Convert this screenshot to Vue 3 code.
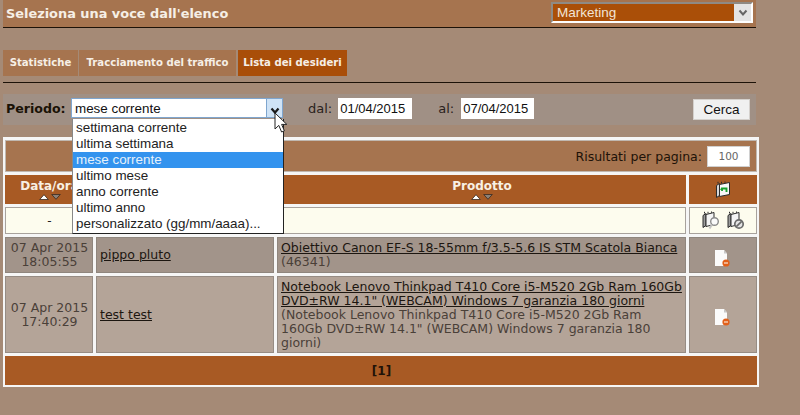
<script setup>
const tabs = [
  { label: 'Statistiche', active: false },
  { label: 'Tracciamento del traffico', active: false },
  { label: 'Lista dei desideri', active: true }
];

const periods = [
  'settimana corrente',
  'ultima settimana',
  'mese corrente',
  'ultimo mese',
  'anno corrente',
  'ultimo anno',
  'personalizzato (gg/mm/aaaa)...'
];

const columns = ['Data/ora', 'Utente', 'Prodotto'];

const rows = [
  {
    date: '07 Apr 2015',
    time: '18:05:55',
    user: 'pippo pluto',
    product: 'Obiettivo Canon EF-S 18-55mm f/3.5-5.6 IS STM Scatola Bianca',
    detail: '(46341)',
    tone: 'dark'
  },
  {
    date: '07 Apr 2015',
    time: '17:40:29',
    user: 'test test',
    product: 'Notebook Lenovo Thinkpad T410 Core i5-M520 2Gb Ram 160Gb DVD±RW 14.1" (WEBCAM) Windows 7 garanzia 180 giorni',
    detail: '(Notebook Lenovo Thinkpad T410 Core i5-M520 2Gb Ram 160Gb DVD±RW 14.1" (WEBCAM) Windows 7 garanzia 180 giorni)',
    tone: 'light'
  }
];
</script>

<template>
  <div class="page">
    <header class="top">
      <h1>Seleziona una voce dall'elenco</h1>
      <div class="dept">
        <span>Marketing</span>
        <i class="dept-arrow">
          <svg width="10" height="8" viewBox="0 0 10 8"><path d="M1.5 1.5 5 5.5 8.5 1.5" fill="none" stroke="#666" stroke-width="2" /></svg>
        </i>
      </div>
    </header>

    <nav class="tabs">
      <a v-for="tab in tabs" :key="tab.label" :class="{ active: tab.active }">{{ tab.label }}</a>
    </nav>

    <form class="filter" @submit.prevent>
      <b class="periodo">Periodo:</b>
      <div class="period-select">
        <span class="value">mese corrente</span>
        <i class="arrow">
          <svg width="10" height="8" viewBox="0 0 10 8"><path d="M1.5 1.5 5 5.5 8.5 1.5" fill="none" stroke="#1a1a1a" stroke-width="2.2" /></svg>
        </i>
        <ul class="options">
          <li v-for="p in periods" :key="p" :class="{ sel: p === 'mese corrente' }">{{ p }}</li>
        </ul>
        <svg class="cursor" width="15" height="22" viewBox="0 0 15 22">
          <path d="M1 1V17L4.8 13.4 7.6 20 10.4 18.8 7.6 12.4H12.8Z" fill="#fff" stroke="#222" stroke-width="1" />
        </svg>
      </div>
      <label class="dal">dal:</label>
      <input class="date" value="01/04/2015" readonly />
      <label class="al">al:</label>
      <input class="date" value="07/04/2015" readonly />
      <button class="cerca" type="button">Cerca</button>
    </form>

    <section class="grid">
      <div class="cell wide pager-top">
        Risultati per pagina:
        <input class="per-page" value="100" readonly />
      </div>

      <div v-for="col in columns" :key="col" class="cell head">
        <span>{{ col }}</span>
        <span class="sort">
          <svg width="10" height="6" viewBox="0 0 10 6"><path d="M5 .7 9.3 5.5H.7Z" fill="#fff" stroke="#3a2a20" stroke-width=".8" /></svg>
          <svg width="10" height="6" viewBox="0 0 10 6"><path d="M.7 .5H9.3L5 5.3Z" fill="#8c8178" stroke="#3a2a20" stroke-width=".8" /></svg>
        </span>
      </div>
      <div class="cell head head-icon">
        <svg width="16" height="18" viewBox="0 0 16 18">
          <path d="M1.5 4.5 4.5 2.5V14.5L1.5 16.5Z" fill="#d8d8d8" stroke="#2c2c2c" />
          <path d="M4.5 3.5 14.5 1.5V13.5L4.5 15.5Z" fill="#f8f8f8" stroke="#2c2c2c" />
          <path d="M3 2.5 3 .8M6.5 2.5 6.5 .8M10 1.8 10 .5" stroke="#2c2c2c" />
          <path d="M7 10V7.5H11.5V11M7 7.5 5.8 9" fill="none" stroke="#16a02c" stroke-width="1.9" />
        </svg>
      </div>

      <div class="cell search center">-</div>
      <div class="cell search"></div>
      <div class="cell search"></div>
      <div class="cell search center note-cell">
        <svg width="18" height="19" viewBox="0 0 18 19">
          <path d="M1 4.500 4 2.500V14.500L1 16.500Z" fill="#9c9c9c" stroke="#2c2c2c" />
          <path d="M4 3.500 12 1.500V13.500L4 15.500Z" fill="#f4f4f4" stroke="#2c2c2c" />
          <path d="M2.500 2.500V.8M6 2.500V.8M9.500 1.800V.5" stroke="#2c2c2c" />
          <circle cx="12.5" cy="10.5" r="3.8" fill="#fafafa" stroke="#8a8a8a" stroke-width="1.4" />
          <path d="M10 13.500 7.500 17.500" stroke="#c4c4c4" stroke-width="2" />
        </svg>
        <svg width="18" height="19" viewBox="0 0 18 19">
          <path d="M1 4.500 4 2.500V14.500L1 16.500Z" fill="#9c9c9c" stroke="#2c2c2c" />
          <path d="M4 3.500 12 1.500V13.500L4 15.500Z" fill="#f4f4f4" stroke="#2c2c2c" />
          <path d="M2.500 2.500V.8M6 2.500V.8M9.500 1.800V.5" stroke="#2c2c2c" />
          <circle cx="12" cy="13" r="4.2" fill="#e4e4e4" stroke="#6a6a6a" stroke-width="1.7" />
          <path d="M9.3 15.700 14.700 10.300" stroke="#6a6a6a" stroke-width="1.7" />
        </svg>
      </div>

      <template v-for="row in rows" :key="row.time">
        <div class="cell data center muted" :class="row.tone">{{ row.date }}<br />{{ row.time }}</div>
        <div class="cell data" :class="row.tone"><a class="link">{{ row.user }}</a></div>
        <div class="cell data product" :class="row.tone">
          <div><a class="link">{{ row.product }}</a><br /><span class="muted">{{ row.detail }}</span></div>
        </div>
        <div class="cell data center doc" :class="row.tone">
          <svg width="16" height="17" viewBox="0 0 16 17">
            <path d="M1 0H10L13 3.500V16H1Z" fill="#fbfbfb" />
            <path d="M10 0V3.500H13Z" fill="#c8c8c8" />
            <circle cx="12" cy="13" r="3.6" fill="#e2601a" />
            <path d="M10 13H14" stroke="#fbe4d4" stroke-width="1.2" />
          </svg>
        </div>
      </template>

      <div class="cell wide pager-bottom">[1]</div>
    </section>
  </div>
</template>

<style>
html,
body {
  background: #a58a76;
}
</style>

<style scoped>
.page {
  width: 756px;
  padding: 0 0 28px 3px;
  font-family: "DejaVu Sans", sans-serif;
  font-size: 12px;
  color: #222;
}

.top {
  display: flex;
  justify-content: space-between;
  align-items: flex-start;
  width: 753px;
  height: 27px;
  background: #a6744f;
  border-bottom: 1px solid #1c1208;
}

.top h1 {
  margin: 6px 0 0 3px;
  font-size: 12.9px;
  font-weight: bold;
  line-height: 16px;
  color: #f6efe6;
}

.dept {
  display: flex;
  align-items: center;
  justify-content: space-between;
  width: 202px;
  height: 21px;
  margin: 2px 3px 0 0;
  padding-left: 4px;
  box-sizing: border-box;
  background: #aa4f08;
  border: 2px solid;
  border-color: #8f8a84 #fff #fff #8f8a84;
  font-family: "Liberation Sans", sans-serif;
  font-size: 13.5px;
  color: #f2e4d6;
}

.dept-arrow {
  display: flex;
  align-items: center;
  justify-content: center;
  width: 17px;
  height: 17px;
  background: #e4e4e4;
}

.tabs {
  display: grid;
  grid-template-columns: 75px 157px 110px;
  gap: 1px;
  width: 753px;
  height: 26px;
  margin-top: 22px;
  padding-bottom: 6px;
  border-bottom: 1px solid #1c1208;
}

.tabs a {
  background: #a6744f;
  font-size: 10.15px;
  font-weight: bold;
  line-height: 26px;
  text-align: center;
  color: #f6efe6;
}

.tabs a.active {
  margin-left: 1px;
  background: #a94e09;
}

.filter {
  display: flex;
  align-items: flex-start;
  width: 753px;
  height: 31px;
  margin-top: 11px;
  padding-top: 4px;
  box-sizing: border-box;
  background: #a09085;
}

.periodo {
  width: 65px;
  margin-left: 3px;
  font-size: 12.6px;
  line-height: 21px;
  color: #1a1206;
}

.period-select {
  position: relative;
  display: flex;
  align-items: center;
  justify-content: space-between;
  width: 212px;
  height: 20px;
  box-sizing: border-box;
  background: #fff;
  border: 1px solid #7fa6cf;
  font-family: "Liberation Sans", sans-serif;
  font-size: 13.4px;
  color: #111;
}

.value {
  padding-left: 3px;
}

.arrow {
  display: flex;
  align-items: flex-end;
  justify-content: center;
  width: 16px;
  height: 18px;
  padding-bottom: 2px;
  box-sizing: border-box;
  background: #cfe3f6;
  border-left: 1px solid #7fa6cf;
}

.options {
  position: absolute;
  top: 20px;
  left: 0;
  z-index: 3;
  width: 212px;
  margin: 0;
  padding: 1px 0;
  box-sizing: border-box;
  list-style: none;
  background: #fff;
  border: 1px solid #222;
  border-top: 0;
  border-left-color: #888;
  line-height: 16px;
}

.options li {
  padding-left: 3px;
  color: #222;
}

.options li.sel {
  background: #3393ee;
  color: #e6f1fb;
}

.cursor {
  position: absolute;
  z-index: 4;
  top: 13px;
  left: 202px;
}

.dal,
.al {
  font-size: 13px;
  line-height: 21px;
  color: #2a221c;
}

.dal {
  margin-left: 25px;
}

.al {
  margin-left: 26px;
}

.date {
  width: 74px;
  height: 21px;
  margin-left: 6px;
  padding: 0 0 0 2px;
  box-sizing: border-box;
  border: 0;
  outline: 0;
  background: #fff;
  font-family: "Liberation Sans", sans-serif;
  font-size: 13px;
  color: #111;
}

.al + .date {
  margin-left: 7px;
  width: 73px;
}

.cerca {
  width: 57px;
  height: 21px;
  margin: 1px 6px 0 auto;
  padding: 0;
  border: 1px solid #d4d0cc;
  background: #f0f0f0;
  font-family: "Liberation Sans", sans-serif;
  font-size: 13.5px;
  color: #111;
}

.grid {
  display: grid;
  grid-template-columns: 88px 178px 409px 68px;
  grid-template-rows: 32px 29px 27px 36px 77px 29px;
  column-gap: 3px;
  row-gap: 3px;
  justify-content: start;
  width: 756px;
  margin-top: 12px;
  padding: 3px 2px 2px;
  box-sizing: border-box;
  background: #f6f6f6;
}

.cell {
  display: flex;
  align-items: center;
  box-sizing: border-box;
  padding: 0 2px 0 3px;
  border: 1px solid #a8a29c;
}

.wide {
  grid-column: 1 / -1;
}

.center {
  justify-content: center;
  text-align: center;
}

.pager-top {
  justify-content: flex-end;
  padding-right: 6px;
  background: #a6744f;
  border-color: #c0b8b0;
  font-size: 12.5px;
  color: #201208;
}

.per-page {
  width: 43px;
  height: 21px;
  margin-left: 5px;
  padding: 0;
  box-sizing: border-box;
  border: 1px solid #d0d0d0;
  outline: 0;
  background: #fff;
  text-align: center;
  font-family: "DejaVu Sans", sans-serif;
  font-size: 10.5px;
  color: #666;
}

.head {
  flex-direction: column;
  padding-top: 4px;
  background: #a85a24;
  border-color: #a85a24;
  font-size: 12px;
  font-weight: bold;
  line-height: 13px;
  color: #f8f0e4;
}

.sort {
  display: flex;
  gap: 2px;
  margin-top: 1px;
}

.head-icon {
  justify-content: center;
  padding: 0;
}

.search {
  background: #fdfcee;
}

.note-cell {
  gap: 7px;
}

.data {
  font-size: 12.5px;
  line-height: 14px;
}

.doc {
  padding: 6px 3px 0 0;
}

.dark {
  background: #a2948a;
  border-color: #8f867e;
}

.light {
  background: #b4a498;
  border-color: #968c84;
}

.product {
  padding-left: 3px;
}

.muted {
  color: #4a4038;
}

.link {
  color: #1c1610;
  text-decoration: underline;
}

.pager-bottom {
  justify-content: center;
  background: #a85a24;
  border-color: #a85a24;
  font-size: 12px;
  font-weight: bold;
  color: #201208;
}
</style>
